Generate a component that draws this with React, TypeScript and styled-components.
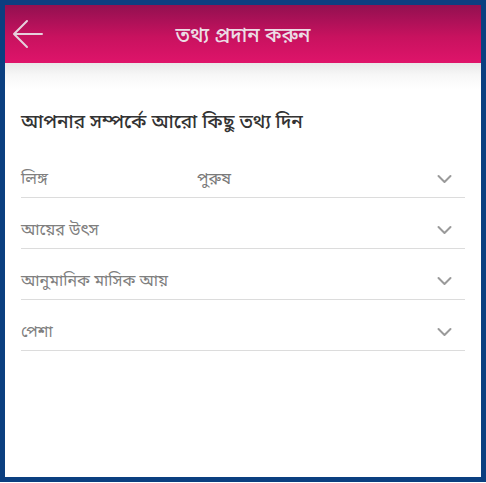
import styled, { createGlobalStyle } from "styled-components";

const GlobalStyle = createGlobalStyle`
    html, body {
        margin: 0;
        padding: 0;
        background: #ffffff;
    }
    body {
        font-family: "Noto Sans", "Noto Sans Bengali", "Liberation Sans", sans-serif;
    }
`;

const Frame = styled.div`
    width: 486px;
    height: 482px;
    box-sizing: border-box;
    border: 5px solid #0b3f80;
    display: flex;
    flex-direction: column;
    background: #ffffff;
`;

const Header = styled.header`
    height: 58px;
    flex-shrink: 0;
    display: grid;
    grid-template-columns: 48px 1fr 48px;
    align-items: center;
    background: linear-gradient(180deg, #921050 0%, #c8125f 55%, #df146a 100%);
`;

const BackButton = styled.button`
    border: none;
    background: none;
    padding: 0 0 0 7px;
    display: flex;
    align-items: center;
    cursor: pointer;
`;

const Title = styled.h1`
    margin: 0;
    text-align: center;
    font-size: 20.5px;
    font-weight: 500;
    line-height: 24px;
    color: #ecdde5;
`;

const Content = styled.main`
    flex: 1;
    display: flex;
    flex-direction: column;
    padding: 46px 16px 0 16px;
    background: linear-gradient(180deg, #e8e8e8 0px, #f7f7f7 12px, #ffffff 26px);
`;

const Heading = styled.h2`
    margin: 0 0 14px 0;
    font-size: 19px;
    font-weight: 500;
    line-height: 24px;
    color: #333333;
`;

const Row = styled.div`
    height: 36px;
    margin-top: 14px;
    display: grid;
    grid-template-columns: 176px 1fr auto;
    align-items: center;
    border-bottom: 1px solid #dcdcdc;
    cursor: pointer;
`;

const Label = styled.span`
    font-size: 16px;
    color: #7f7f7f;
`;

const Value = styled.span`
    font-size: 16px;
    color: #7a7a7a;
`;

const Chevron = styled.span`
    display: flex;
    padding-right: 13px;
`;

const fields = [
    { label: "লিঙ্গ", value: "পুরুষ" },
    { label: "আয়ের উৎস", value: "" },
    { label: "আনুমানিক মাসিক আয়", value: "" },
    { label: "পেশা", value: "" },
];

const ChevronIcon = () => (
    <svg width="15" height="10" viewBox="0 0 15 10">
        <path d="M1.5 2 L7.5 8 L13.5 2" fill="none" stroke="#9a9a9a" strokeWidth="2" strokeLinecap="round" strokeLinejoin="round" />
    </svg>
);

const ArrowIcon = () => (
    <svg width="32" height="30" viewBox="0 0 32 30">
        <path d="M30 15 H3 M15 2 L2 15 L15 28" fill="none" stroke="#e6d0dc" strokeWidth="2" strokeLinecap="round" strokeLinejoin="round" />
    </svg>
);

export default function App() {
    return (
        <>
            <GlobalStyle />
            <Frame>
                <Header>
                    <BackButton aria-label="back">
                        <ArrowIcon />
                    </BackButton>
                    <Title>তথ্য প্রদান করুন</Title>
                    <span />
                </Header>
                <Content>
                    <Heading>আপনার সম্পর্কে আরো কিছু তথ্য দিন</Heading>
                    {fields.map((field) => (
                        <Row key={field.label}>
                            <Label>{field.label}</Label>
                            <Value>{field.value}</Value>
                            <Chevron>
                                <ChevronIcon />
                            </Chevron>
                        </Row>
                    ))}
                </Content>
            </Frame>
        </>
    );
}
